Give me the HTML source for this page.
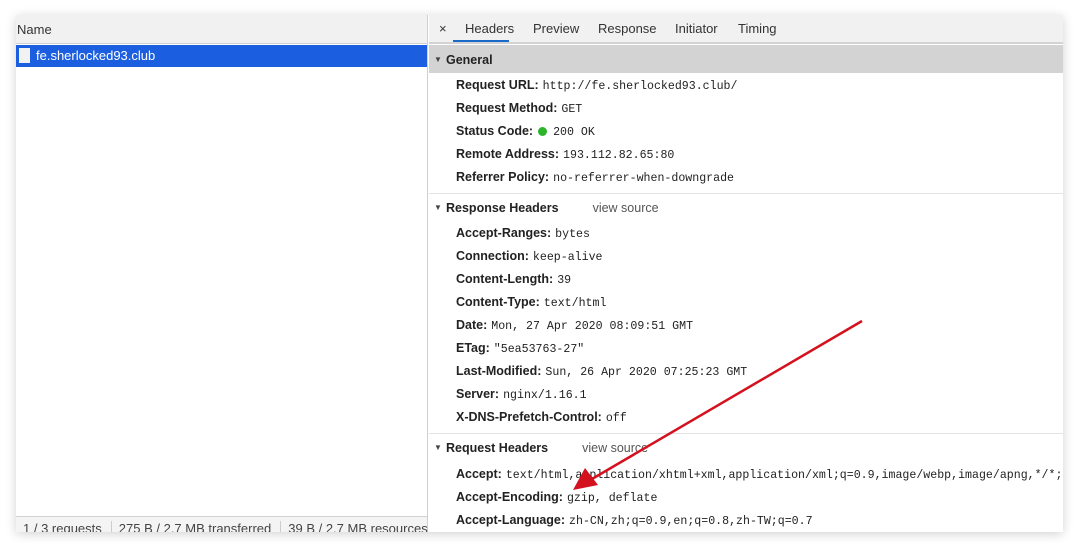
<!DOCTYPE html>
<html><head><meta charset="utf-8"><style>
*{margin:0;padding:0;box-sizing:border-box}
body{width:1080px;height:548px;background:#fff;font-family:"Liberation Sans",sans-serif;font-size:12.5px;color:#222;position:relative;overflow:hidden}
.win{position:absolute;left:16px;top:15px;width:1047px;height:517px;background:#fff;box-shadow:0 2px 10px rgba(0,0,0,.18);overflow:hidden}
.lp{position:absolute;left:0;top:0;width:412px;height:517px;border-right:1px solid #cfcfcf}
.lh{height:29px;background:#f1f1f1;border-bottom:1px solid #d0d0d0;padding:7px 0 0 1px;font-size:13px;color:#333}
.sel{position:absolute;top:30px;left:0;width:411px;height:22px;background:#1b5fe0;color:#fff;font-size:13px;padding:3px 0 0 20px}
.sel i{position:absolute;left:3px;top:3px;width:11px;height:15px;background:#f2f2f2}
.sb{position:absolute;left:0;top:501px;width:411px;height:16px;border-top:1px solid #d0d0d0;background:#f4f4f4;font-size:13px;color:#444;white-space:nowrap;padding-top:4px}
.sb span{display:inline-block;padding:0 9px 0 7px;border-right:1px solid #ccc}
.rp{position:absolute;left:413px;top:0;right:0;height:517px}
.tabs{height:29px;background:#f1f1f1;border-bottom:2px solid #d3d3d3;position:relative;font-size:13px;color:#333}
.tabs span{position:absolute;top:6px}
.ul{position:absolute;left:24px;top:25px;width:56px;height:2px;background:#1b6ac9}
.gen{position:absolute;top:30px;left:0;right:0;height:28px;background:#d3d3d3;font-weight:bold;padding:8px 0 0 17px}
.tri{position:absolute;left:5px;font-size:8px;color:#444}
.sec{position:absolute;left:0;right:0;font-weight:bold;padding-left:17px}
.vs{font-weight:normal;color:#555;margin-left:34px}
.row{position:absolute;left:27px;white-space:nowrap;font-weight:bold;color:#222}
.row m{font-family:"Liberation Mono",monospace;font-weight:normal;font-size:11.6px;color:#222;margin-left:4px}
.hr{position:absolute;left:0;right:0;height:1px;background:#e3e3e3}
.dot{display:inline-block;width:9px;height:9px;border-radius:50%;background:#2cb52c;margin:0 2px 0 5px;vertical-align:-1px}
</style></head><body>
<div class="win">
 <div class="lp">
  <div class="lh">Name</div>
  <div class="sel"><i></i>fe.sherlocked93.club</div>
  <div class="sb"><span>1 / 3 requests</span><span>275 B / 2.7 MB transferred</span><span style="border:0">39 B / 2.7 MB resources</span></div>
 </div>
 <div class="rp">
  <div class="tabs"><span style="left:10px">×</span><span style="left:36px">Headers</span><span style="left:104px">Preview</span><span style="left:169px">Response</span><span style="left:246px">Initiator</span><span style="left:309px">Timing</span><div class="ul"></div></div>
  <div class="gen"><span class="tri" style="top:10px">▼</span>General</div>
  <div class="row" style="top:63px">Request URL:<m>http://fe.sherlocked93.club/</m></div>
  <div class="row" style="top:86px">Request Method:<m>GET</m></div>
  <div class="row" style="top:109px">Status Code:<span class="dot"></span><m>200 OK</m></div>
  <div class="row" style="top:132px">Remote Address:<m>193.112.82.65:80</m></div>
  <div class="row" style="top:155px">Referrer Policy:<m>no-referrer-when-downgrade</m></div>
  <div class="hr" style="top:178px"></div>
  <div class="sec" style="top:186px"><span class="tri" style="top:2px">▼</span>Response Headers<span class="vs">view source</span></div>
  <div class="row" style="top:211px">Accept-Ranges:<m>bytes</m></div>
  <div class="row" style="top:234px">Connection:<m>keep-alive</m></div>
  <div class="row" style="top:257px">Content-Length:<m>39</m></div>
  <div class="row" style="top:280px">Content-Type:<m>text/html</m></div>
  <div class="row" style="top:303px">Date:<m>Mon, 27 Apr 2020 08:09:51 GMT</m></div>
  <div class="row" style="top:326px">ETag:<m>"5ea53763-27"</m></div>
  <div class="row" style="top:349px">Last-Modified:<m>Sun, 26 Apr 2020 07:25:23 GMT</m></div>
  <div class="row" style="top:372px">Server:<m>nginx/1.16.1</m></div>
  <div class="row" style="top:395px">X-DNS-Prefetch-Control:<m>off</m></div>
  <div class="hr" style="top:418px"></div>
  <div class="sec" style="top:426px"><span class="tri" style="top:2px">▼</span>Request Headers<span class="vs">view source</span></div>
  <div class="row" style="top:452px">Accept:<m>text/html,application/xhtml+xml,application/xml;q=0.9,image/webp,image/apng,*/*;</m></div>
  <div class="row" style="top:475px">Accept-Encoding:<m>gzip, deflate</m></div>
  <div class="row" style="top:498px">Accept-Language:<m>zh-CN,zh;q=0.9,en;q=0.8,zh-TW;q=0.7</m></div>
 </div>
</div>
<svg style="position:absolute;left:0;top:0" width="1080" height="548">
 <line x1="862" y1="321" x2="592" y2="479" stroke="#d4111e" stroke-width="2.5"/>
 <polygon points="573,490 585,468 598,485" fill="#d4111e"/>
</svg>
</body></html>
